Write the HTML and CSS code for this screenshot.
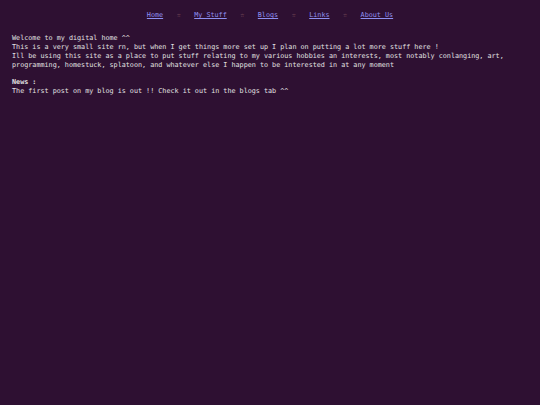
FILE: index.html
```html
<!DOCTYPE html>
<html>
<head>
<meta charset="utf-8">
<link rel="stylesheet" href="styles.css">
</head>
<body>
<nav class="nav"><a href="#">Home</a><span class="star">☆</span><a href="#">My Stuff</a><span class="star">☆</span><a href="#">Blogs</a><span class="star">☆</span><a href="#">Links</a><span class="star">☆</span><a href="#">About Us</a></nav>
<main class="content">
<p class="intro">Welcome to my digital home ^^<br>This is a very small site rn, but when I get things more set up I plan on putting a lot more stuff here !<br>Ill be using this site as a place to put stuff relating to my various hobbies an interests, most notably conlanging, art,<br>programming, homestuck, splatoon, and whatever else I happen to be interested in at any moment</p>
<p class="news"><b>News :</b><br>The first post on my blog is out !! Check it out in the blogs tab ^^</p>
</main>
</body>
</html>
```
FILE: styles.css
```css
html, body {
  margin: 0;
  padding: 0;
  background: #2e1032;
  min-height: 100%;
}
body {
  font-family: "DejaVu Sans Mono", monospace;
  font-size: 6.75px;
  line-height: 9px;
  color: #e2e2e2;
}
.nav {
  padding-top: 11px;
  text-align: center;
  white-space: nowrap;
}
.nav a {
  color: #8f8ff0;
  text-decoration: underline;
}
.star {
  color: #b07a78;
  padding: 0 13.5px;
}
.content {
  padding: 14px 12px 0 12px;
}
.content p {
  margin: 0;
}
.intro {
  margin-bottom: 8px !important;
}
```
